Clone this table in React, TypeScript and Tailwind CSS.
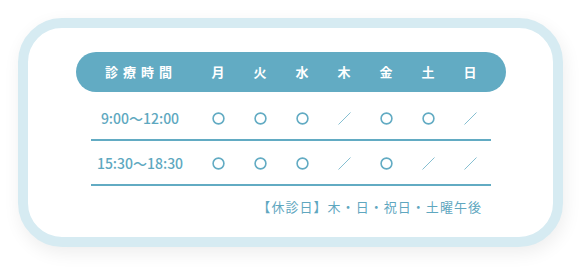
const days = ["月", "火", "水", "木", "金", "土", "日"]

const rows: { time: string; marks: boolean[] }[] = [
  { time: "9:00〜12:00", marks: [true, true, true, false, true, true, false] },
  { time: "15:30〜18:30", marks: [true, true, true, false, true, false, false] },
]

function Circle() {
  return (
    <svg width="13" height="13" viewBox="0 0 13 13" className="block">
      <circle cx="6.5" cy="6.5" r="5.4" fill="none" stroke="#62abc3" strokeWidth="1.6" />
    </svg>
  )
}

function Slash() {
  return (
    <svg width="13" height="13" viewBox="0 0 13 13" className="block">
      <line x1="0.5" y1="12.5" x2="12.5" y2="0.5" stroke="#86bfd1" strokeWidth="1" />
    </svg>
  )
}

export default function App() {
  return (
    <div className="h-[272px] w-[587px] bg-white pl-[18px] pt-[18px] font-['Noto_Sans_CJK_JP','Noto_Sans',sans-serif]">
      <div className="h-[229px] w-[545px] rounded-[44px] border-[10px] border-[#d6ebf2] bg-white shadow-[2px_6px_18px_rgba(0,0,0,0.07)]">
        <div className="px-[47px] pt-[24px] pl-[48px]">
          <div className="flex h-[40px] items-center rounded-full bg-[#62abc3] px-[15px] text-[13px] font-bold text-white">
            <div className="w-[106px] pl-[2px] pr-[8px] text-center tracking-[0.38em]">診療時間</div>
            {days.map((day) => (
              <div className="w-[42px] text-center" key={day}>
                {day}
              </div>
            ))}
          </div>

          <div className="mx-[15px] mt-[4px]">
            {rows.map((row) => (
              <div className="flex h-[45px] items-center border-b-2 border-[#62abc3]" key={row.time}>
                <div className="w-[106px] pr-[8px] pt-[2px] text-center text-[14px] font-medium text-[#5ea8c0]">
                  {row.time}
                </div>
                {row.marks.map((open, index) => (
                  <div className="flex w-[42px] justify-center pt-[2px]" key={index}>
                    {open ? <Circle /> : <Slash />}
                  </div>
                ))}
              </div>
            ))}
          </div>

          <p className="mt-[11px] pr-[24px] text-right text-[13px] leading-[20px] tracking-[0.08em] text-[#5fa7bf]">
            【休診日】木・日・祝日・土曜午後
          </p>
        </div>
      </div>
    </div>
  )
}
